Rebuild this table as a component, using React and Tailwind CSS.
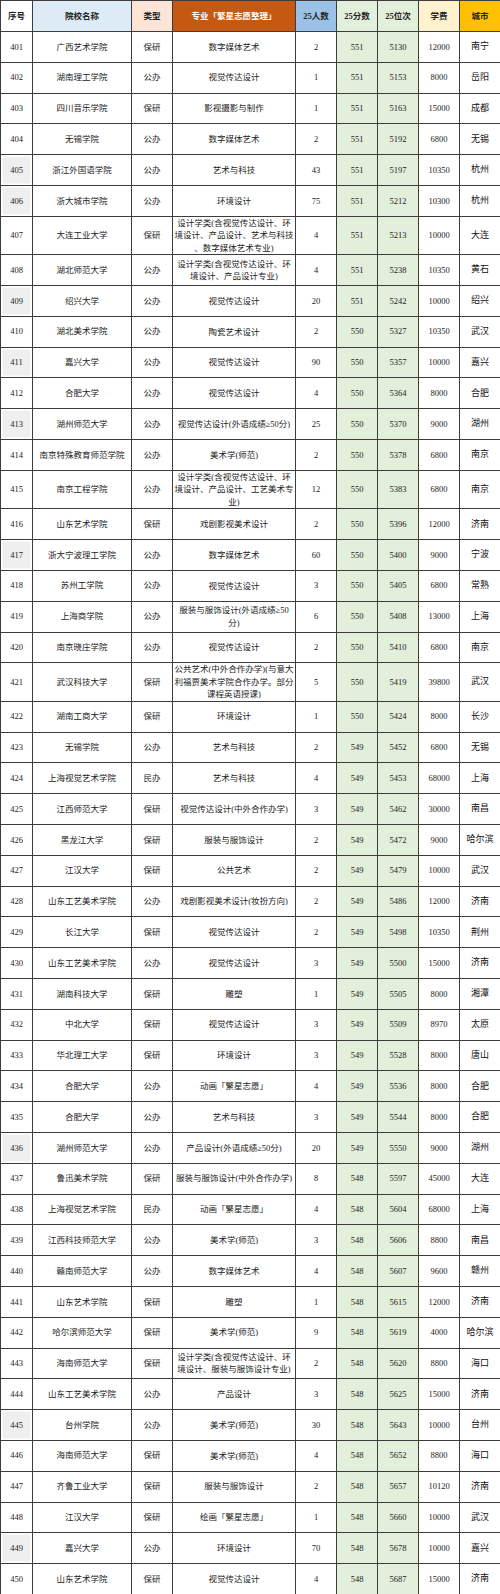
const rows = [
  ['401', '广西艺术学院', '保研', ['数字媒体艺术'], '2', '551', '5130', '12000', '南宁'],
  ['402', '湖南理工学院', '公办', ['视觉传达设计'], '1', '551', '5153', '8000', '岳阳'],
  ['403', '四川音乐学院', '保研', ['影视摄影与制作'], '1', '551', '5163', '15000', '成都'],
  ['404', '无锡学院', '公办', ['数字媒体艺术'], '2', '551', '5192', '6800', '无锡'],
  ['405', '浙江外国语学院', '公办', ['艺术与科技'], '43', '551', '5197', '10350', '杭州', true],
  ['406', '浙大城市学院', '公办', ['环境设计'], '75', '551', '5212', '10300', '杭州', true],
  ['407', '大连工业大学', '保研', ['设计学类(含视觉传达设计、环', '境设计、产品设计、艺术与科技', '、数字媒体艺术专业)'], '4', '551', '5213', '10000', '大连'],
  ['408', '湖北师范大学', '公办', ['设计学类(含视觉传达设计、环', '境设计、产品设计专业)'], '4', '551', '5238', '10350', '黄石'],
  ['409', '绍兴大学', '公办', ['视觉传达设计'], '20', '551', '5242', '10000', '绍兴', true],
  ['410', '湖北美术学院', '公办', ['陶瓷艺术设计'], '2', '550', '5327', '10350', '武汉'],
  ['411', '嘉兴大学', '公办', ['视觉传达设计'], '90', '550', '5357', '10000', '嘉兴', true],
  ['412', '合肥大学', '公办', ['视觉传达设计'], '4', '550', '5364', '8000', '合肥'],
  ['413', '湖州师范大学', '公办', ['视觉传达设计(外语成绩≥50分)'], '25', '550', '5370', '9000', '湖州', true],
  ['414', '南京特殊教育师范学院', '公办', ['美术学(师范)'], '2', '550', '5378', '6800', '南京'],
  ['415', '南京工程学院', '公办', ['设计学类(含视觉传达设计、环', '境设计、产品设计、工艺美术专', '业)'], '12', '550', '5383', '6800', '南京'],
  ['416', '山东艺术学院', '保研', ['戏剧影视美术设计'], '2', '550', '5396', '12000', '济南'],
  ['417', '浙大宁波理工学院', '公办', ['数字媒体艺术'], '60', '550', '5400', '9000', '宁波', true],
  ['418', '苏州工学院', '公办', ['视觉传达设计'], '3', '550', '5405', '6800', '常熟'],
  ['419', '上海商学院', '公办', ['服装与服饰设计(外语成绩≥50', '分)'], '6', '550', '5408', '13000', '上海'],
  ['420', '南京晓庄学院', '公办', ['视觉传达设计'], '2', '550', '5410', '6800', '南京'],
  ['421', '武汉科技大学', '保研', ['公共艺术(中外合作办学)(与意大', '利福贾美术学院合作办学。部分', '课程英语授课)'], '5', '550', '5419', '39800', '武汉'],
  ['422', '湖南工商大学', '保研', ['环境设计'], '1', '550', '5424', '8000', '长沙'],
  ['423', '无锡学院', '公办', ['艺术与科技'], '2', '549', '5452', '6800', '无锡'],
  ['424', '上海视觉艺术学院', '民办', ['艺术与科技'], '4', '549', '5453', '68000', '上海'],
  ['425', '江西师范大学', '保研', ['视觉传达设计(中外合作办学)'], '3', '549', '5462', '30000', '南昌'],
  ['426', '黑龙江大学', '保研', ['服装与服饰设计'], '2', '549', '5472', '9000', '哈尔滨'],
  ['427', '江汉大学', '保研', ['公共艺术'], '2', '549', '5479', '10000', '武汉'],
  ['428', '山东工艺美术学院', '公办', ['戏剧影视美术设计(妆扮方向)'], '2', '549', '5486', '12000', '济南'],
  ['429', '长江大学', '保研', ['视觉传达设计'], '2', '549', '5498', '10350', '荆州'],
  ['430', '山东工艺美术学院', '公办', ['视觉传达设计'], '3', '549', '5500', '15000', '济南'],
  ['431', '湖南科技大学', '保研', ['雕塑'], '1', '549', '5505', '8000', '湘潭'],
  ['432', '中北大学', '保研', ['视觉传达设计'], '3', '549', '5509', '8970', '太原'],
  ['433', '华北理工大学', '保研', ['环境设计'], '3', '549', '5528', '8000', '唐山'],
  ['434', '合肥大学', '公办', ['动画「繁星志愿」'], '4', '549', '5536', '8000', '合肥'],
  ['435', '合肥大学', '公办', ['艺术与科技'], '3', '549', '5544', '8000', '合肥'],
  ['436', '湖州师范大学', '公办', ['产品设计(外语成绩≥50分)'], '20', '549', '5550', '9000', '湖州', true],
  ['437', '鲁迅美术学院', '保研', ['服装与服饰设计(中外合作办学)'], '8', '548', '5597', '45000', '大连'],
  ['438', '上海视觉艺术学院', '民办', ['动画「繁星志愿」'], '4', '548', '5604', '68000', '上海'],
  ['439', '江西科技师范大学', '公办', ['美术学(师范)'], '3', '548', '5606', '8800', '南昌'],
  ['440', '赣南师范大学', '公办', ['数字媒体艺术'], '4', '548', '5607', '9600', '赣州'],
  ['441', '山东艺术学院', '保研', ['雕塑'], '1', '548', '5615', '12000', '济南'],
  ['442', '哈尔滨师范大学', '保研', ['美术学(师范)'], '9', '548', '5619', '4000', '哈尔滨'],
  ['443', '海南师范大学', '保研', ['设计学类(含视觉传达设计、环', '境设计、服装与服饰设计专业)'], '2', '548', '5620', '8800', '海口'],
  ['444', '山东工艺美术学院', '公办', ['产品设计'], '3', '548', '5625', '15000', '济南'],
  ['445', '台州学院', '公办', ['美术学(师范)'], '30', '548', '5643', '10000', '台州', true],
  ['446', '海南师范大学', '保研', ['美术学(师范)'], '4', '548', '5652', '8800', '海口'],
  ['447', '齐鲁工业大学', '保研', ['服装与服饰设计'], '2', '548', '5657', '10120', '济南'],
  ['448', '江汉大学', '保研', ['绘画「繁星志愿」'], '1', '548', '5660', '10000', '武汉'],
  ['449', '嘉兴大学', '公办', ['环境设计'], '70', '548', '5678', '10000', '嘉兴', true],
  ['450', '山东艺术学院', '保研', ['视觉传达设计'], '4', '548', '5687', '15000', '济南'],
];

const cell = 'border border-[#3d3d3d] text-center align-middle p-0';

export default function App() {
  return (
    <div className="w-[500px] bg-white text-[#222] text-[8.5px] font-['Liberation_Serif','Noto_Sans_CJK_SC',serif]">
      <table className="w-[500px] table-fixed border-collapse">
        <colgroup>
          <col className="w-[32px]" />
          <col className="w-[99px]" />
          <col className="w-[41px]" />
          <col className="w-[123px]" />
          <col className="w-[41px]" />
          <col className="w-[41px]" />
          <col className="w-[41px]" />
          <col className="w-[41px]" />
          <col className="w-[41px]" />
        </colgroup>
        <thead>
          <tr className="h-[31px] font-semibold">
            <th className={`${cell} bg-white`}>序号</th>
            <th className={`${cell} bg-[#ddebf7]`}>院校名称</th>
            <th className={`${cell} bg-[#fce4d6]`}>类型</th>
            <th className={`${cell} bg-[#c65911] text-white`}>专业「繁星志愿整理」</th>
            <th className={`${cell} bg-[#9bc2e6]`}>25人数</th>
            <th className={`${cell} bg-[#e2efda]`}>25分数</th>
            <th className={`${cell} bg-[#e2efda]`}>25位次</th>
            <th className={`${cell} bg-[#fff2cc]`}>学费</th>
            <th className={`${cell} bg-[#ffc000]`}>城市</th>
          </tr>
        </thead>
        <tbody>
          {rows.map((r) => (
            <tr key={r[0]} className={r[3].length === 3 ? 'h-[38.5px]' : 'h-[30.8px]'}>
              <td className={`${cell} ${r[9] ? 'bg-[#efefef] shadow-[inset_0_0_0_1.5px_white]' : ''}`}>{r[0]}</td>
              <td className={cell}>{r[1]}</td>
              <td className={cell}>{r[2]}</td>
              <td className={`${cell} leading-[12.5px] whitespace-nowrap`}>
                {r[3].map((line, i) => (
                  <div key={i}>{line}</div>
                ))}
              </td>
              <td className={cell}>{r[4]}</td>
              <td className={`${cell} bg-[#e2efda]`}>{r[5]}</td>
              <td className={`${cell} bg-[#e2efda]`}>{r[6]}</td>
              <td className={cell}>{r[7]}</td>
              <td className={`${cell} text-[9px] text-[#111]`}>{r[8]}</td>
            </tr>
          ))}
        </tbody>
      </table>
    </div>
  );
}
